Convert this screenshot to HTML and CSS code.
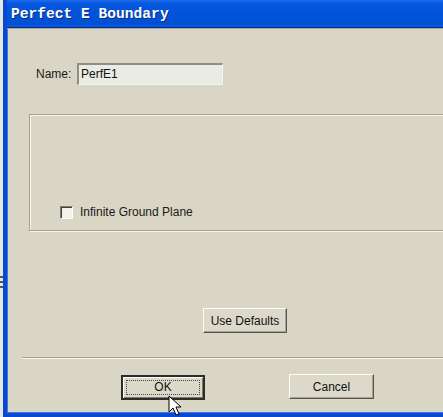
FILE: index.html
```html
<!DOCTYPE html>
<html>
<head>
<meta charset="utf-8">
<link rel="stylesheet" href="styles.css">
</head>
<body>
<div class="desk">
  <div class="desk-marks"><span></span><span></span><span></span></div>
</div>
<div class="window">
  <div class="titlebar"><span class="title">Perfect E Boundary</span></div>
  <div class="client">
    <div class="name-row">
      <span class="label">Name:</span>
      <div class="input">PerfE1</div>
    </div>
    <div class="group">
      <label class="check-row"><span class="checkbox"></span><span class="label">Infinite Ground Plane</span></label>
    </div>
    <div class="defaults-row"><div class="btn btn-defaults">Use Defaults</div></div>
    <div class="separator"></div>
    <div class="buttons-row">
      <div class="btn btn-ok default"><span class="focus">OK</span></div>
      <div class="btn btn-cancel">Cancel</div>
    </div>
  </div>
</div>
<svg class="cursor" width="14" height="22" viewBox="0 0 14 22">
  <path d="M1 1 L1 17 L5 13 L8 20 L11 19 L8 12 L13 12 Z" fill="#fff" stroke="#000" stroke-width="1" stroke-linejoin="miter"/>
</svg>
</body>
</html>
```
FILE: styles.css
```css
html, body {
  margin: 0;
  padding: 0;
}
body {
  width: 443px;
  height: 417px;
  overflow: hidden;
  position: relative;
  background: #d9d6c6;
  font-family: "Liberation Sans", Arial, sans-serif;
  font-size: 12px;
  color: #1a1a1a;
  display: flex;
}
.desk {
  width: 3px;
  flex: none;
  background: #e6e6e2;
  position: relative;
}
.desk-marks {
  display: flex;
  flex-direction: column;
  gap: 3px;
  padding-top: 276px;
}
.desk-marks span {
  display: block;
  height: 2px;
  width: 3px;
  background: #555;
}
.window {
  flex: 1;
  min-width: 0;
  height: 413px;
  overflow: hidden;
  border-left: 4px solid #0a48d0;
  border-bottom: 4px solid #0a48d0;
  box-shadow: inset 1px 0 0 #3a78f0, inset 0 -1px 0 #3a78f0;
  background: #d9d6c6;
  display: flex;
  flex-direction: column;
}
.titlebar {
  height: 28px;
  flex: none;
  background: linear-gradient(#1f6ef0 0, #0858e0 3px, #0054d8 14px, #0050d4 24px, #0a5ae8 27px);
  border-bottom: 1px solid #0a2a80;
  display: flex;
  align-items: center;
  padding-left: 4px;
  box-sizing: border-box;
}
.title {
  font-family: "Liberation Mono", "Courier New", monospace;
  font-weight: bold;
  font-size: 14.6px;
  color: #fff;
  text-shadow: 1px 1px 0 #0a2a80;
  position: relative;
  top: 0px;
}
.client {
  flex: 1;
  display: flex;
  flex-direction: column;
  border-top: 1px solid #a8a8a0;
}
.name-row {
  display: flex;
  align-items: center;
  margin-top: 34px;
  padding-left: 29px;
}
.name-row .label {
  width: 41px;
}
.input {
  width: 146px;
  height: 22px;
  box-sizing: border-box;
  background: #ebebe6;
  border-top: 2px solid #8f8e85;
  border-left: 2px solid #8f8e85;
  border-right: 1px solid #f4f4f0;
  border-bottom: 1px solid #f4f4f0;
  padding-left: 2px;
  line-height: 19px;
  color: #111;
}
.group {
  margin-top: 29px;
  margin-left: 22px;
  margin-right: -6px;
  height: 117px;
  box-sizing: border-box;
  border: 1px solid #a3a195;
  box-shadow: inset 1px 1px 0 #f6f5ef, 1px 1px 0 #f6f5ef;
  display: flex;
  align-items: flex-start;
}
.check-row {
  display: flex;
  align-items: center;
  margin-top: 90px;
  margin-left: 30px;
}
.checkbox {
  width: 13px;
  height: 13px;
  box-sizing: border-box;
  background: #f2f1ec;
  border-top: 1px solid #7d7c74;
  border-left: 1px solid #7d7c74;
  border-right: 1px solid #fff;
  border-bottom: 1px solid #fff;
  box-shadow: inset 1px 1px 0 #404040;
  margin-right: 7px;
}
.defaults-row {
  margin-top: 77px;
  padding-left: 196px;
  display: flex;
}
.btn {
  box-sizing: border-box;
  height: 25px;
  display: flex;
  align-items: center;
  justify-content: center;
  background: #dcd9cb;
  border-top: 1px solid #fdfdf8;
  border-left: 1px solid #fdfdf8;
  border-right: 1px solid #55544f;
  border-bottom: 1px solid #55544f;
  box-shadow: inset -1px -1px 0 #a4a398;
  color: #111;
}
.btn-defaults {
  width: 84px;
}
.separator {
  margin-top: 24px;
  margin-left: 15px;
  height: 0;
  border-top: 1px solid #a3a195;
  border-bottom: 1px solid #f6f5ef;
}
.buttons-row {
  margin-top: 15px;
  padding-left: 114px;
  display: flex;
  align-items: flex-start;
  gap: 84px;
}
.btn-ok {
  width: 84px;
  border: 2px solid #2c2c2a;
  box-shadow: inset 1px 1px 0 #fdfdf8, inset -1px -1px 0 #7a796f;
  margin-top: 1px;
}
.btn-ok .focus {
  width: 74px;
  height: 15px;
  box-sizing: border-box;
  border: 1px dotted #444;
  display: flex;
  align-items: center;
  justify-content: center;
  line-height: 13px;
}
.btn-cancel {
  width: 85px;
}
.cursor {
  position: absolute;
  left: 168px;
  top: 395px;
}
```
